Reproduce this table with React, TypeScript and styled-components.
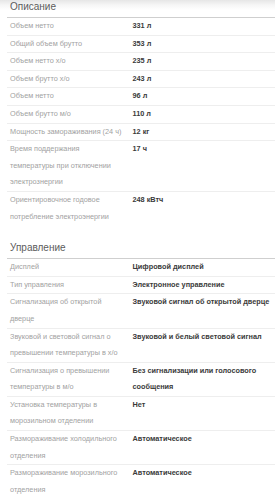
import React from "react";
import styled, { createGlobalStyle } from "styled-components";

const GlobalStyle = createGlobalStyle`
  html, body {
    margin: 0;
    padding: 0;
    background: #ffffff;
  }
  body {
    font-family: "Liberation Sans", Arial, sans-serif;
    overflow: hidden;
  }
`;

const Page = styled.div`
  width: 275px;
  min-height: 500px;
  background: linear-gradient(to bottom, #e6e6e6 0px, #f6f6f6 5px, #ffffff 10px);
  padding-left: 7px;
  box-sizing: border-box;
`;

const Section = styled.section<{ $gap?: number }>`
  margin-top: ${(p) => p.$gap ?? 0}px;
`;

const Heading = styled.h2`
  margin: 0;
  padding: 0 0 3px 3px;
  height: 14px;
  line-height: 14px;
  font-size: 10px;
  font-weight: 400;
  color: #5c5c5c;
  border-bottom: 1px solid #cfcfcf;
`;

const Table = styled.div`
  display: flex;
  flex-direction: column;
`;

const Row = styled.div`
  display: grid;
  grid-template-columns: 125.5px 1fr;
  border-bottom: 1px solid #eeeeee;
  font-size: 7.3px;
  line-height: 16.6px;

  &:last-child {
    border-bottom: none;
  }
`;

const Label = styled.div`
  padding: 0 8px 0 3px;
  color: #a2a2a2;
`;

const Value = styled.div`
  padding-right: 3px;
  color: #3a3a3a;
  font-weight: 700;
`;

type Item = [string, string];

const description: Item[] = [
  ["Объем нетто", "331 л"],
  ["Общий объем брутто", "353 л"],
  ["Объем нетто х/о", "235 л"],
  ["Объем брутто х/о", "243 л"],
  ["Объем нетто", "96 л"],
  ["Объем брутто м/о", "110 л"],
  ["Мощность замораживания (24 ч)", "12 кг"],
  ["Время поддержания температуры при отключении электрознергии", "17 ч"],
  ["Ориентировочное годовое потребление электроэнергии", "248 кВтч"],
];

const control: Item[] = [
  ["Дисплей", "Цифровой дисплей"],
  ["Тип управления", "Электронное управление"],
  ["Сигнализация об открытой дверце", "Звуковой сигнал об открытой дверце"],
  ["Звуковой и световой сигнал о превышении температуры в х/о", "Звуковой и белый световой сигнал"],
  ["Сигнализация о превышении температуры в м/о", "Без сигнализации или голосового сообщения"],
  ["Установка температуры в морозильном отделении", "Нет"],
  ["Размораживание холодильного отделения", "Автоматическое"],
  ["Размораживание морозильного отделения", "Автоматическое"],
];

const Specs = ({ title, items, gap }: { title: string; items: Item[]; gap?: number }) => (
  <Section $gap={gap}>
    <Heading>{title}</Heading>
    <Table>
      {items.map(([label, value], i) => (
        <Row key={i}>
          <Label>{label}</Label>
          <Value>{value}</Value>
        </Row>
      ))}
    </Table>
  </Section>
);

export default function App() {
  return (
    <>
      <GlobalStyle />
      <Page>
        <Specs title="Описание" items={description} />
        <Specs title="Управление" items={control} gap={16} />
      </Page>
    </>
  );
}
